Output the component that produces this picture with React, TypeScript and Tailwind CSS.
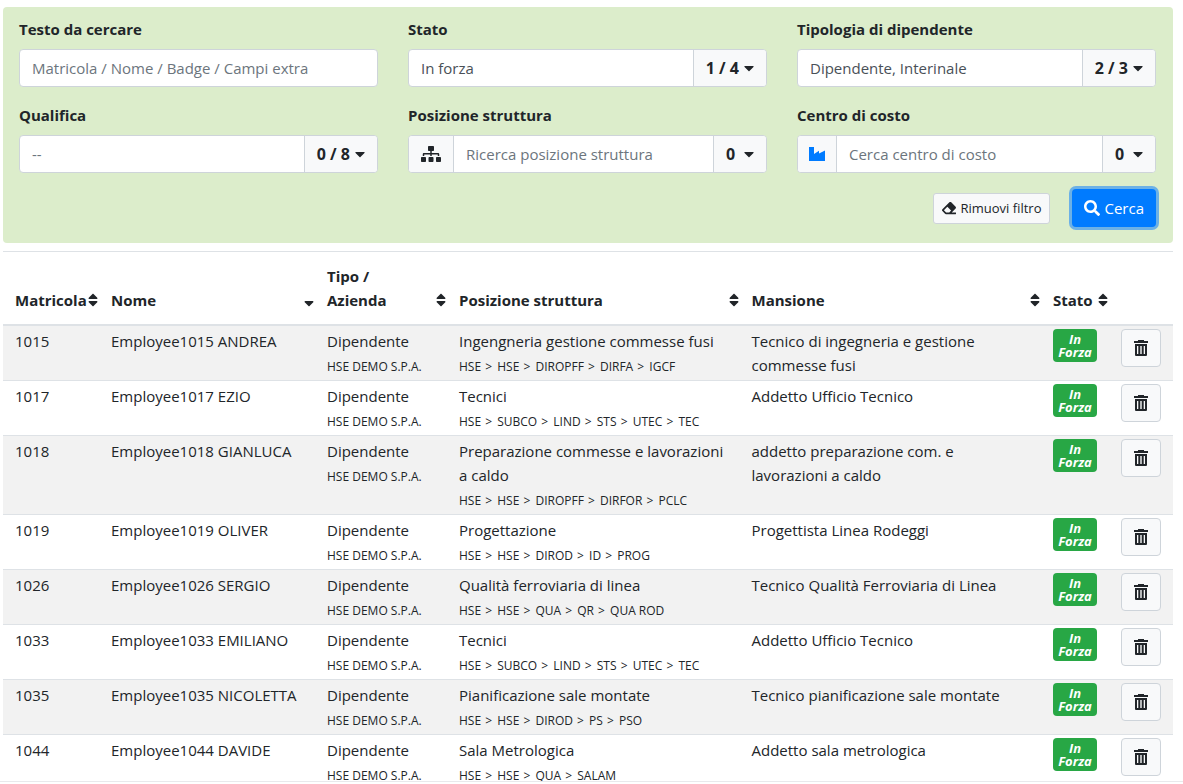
import React, { useState } from 'react';
import { FaCaretDown, FaEraser, FaSearch, FaSitemap, FaSort, FaSortDown } from 'react-icons/fa';

interface Employee {
  id: string;
  name: string;
  position: string;
  path: string[];
  job: string;
}

const employees: Employee[] = [
  { id: '1015', name: 'ANDREA', position: 'Ingengneria gestione commesse fusi', path: ['HSE', 'HSE', 'DIROPFF', 'DIRFA', 'IGCF'], job: 'Tecnico di ingegneria e gestione commesse fusi' },
  { id: '1017', name: 'EZIO', position: 'Tecnici', path: ['HSE', 'SUBCO', 'LIND', 'STS', 'UTEC', 'TEC'], job: 'Addetto Ufficio Tecnico' },
  { id: '1018', name: 'GIANLUCA', position: 'Preparazione commesse e lavorazioni a caldo', path: ['HSE', 'HSE', 'DIROPFF', 'DIRFOR', 'PCLC'], job: 'addetto preparazione com. e lavorazioni a caldo' },
  { id: '1019', name: 'OLIVER', position: 'Progettazione', path: ['HSE', 'HSE', 'DIROD', 'ID', 'PROG'], job: 'Progettista Linea Rodeggi' },
  { id: '1026', name: 'SERGIO', position: 'Qualità ferroviaria di linea', path: ['HSE', 'HSE', 'QUA', 'QR', 'QUA ROD'], job: 'Tecnico Qualità Ferroviaria di Linea' },
  { id: '1033', name: 'EMILIANO', position: 'Tecnici', path: ['HSE', 'SUBCO', 'LIND', 'STS', 'UTEC', 'TEC'], job: 'Addetto Ufficio Tecnico' },
  { id: '1035', name: 'NICOLETTA', position: 'Pianificazione sale montate', path: ['HSE', 'HSE', 'DIROD', 'PS', 'PSO'], job: 'Tecnico pianificazione sale montate' },
  { id: '1044', name: 'DAVIDE', position: 'Sala Metrologica', path: ['HSE', 'HSE', 'QUA', 'SALAM'], job: 'Addetto sala metrologica' },
];

const FactoryIcon = () => (
  <svg width="16" height="14" viewBox="0 0 16 14" fill="#007bff" aria-hidden="true">
    <path d="M0 0h5v7l5-3.200v2.700l6-3v10.500h-16z" />
  </svg>
);

const TrashIcon = () => (
  <svg width="14" height="16" viewBox="0 0 14 16" fill="#212529" aria-hidden="true">
    <path d="M4 0h6v1h4v2h-14v-2h4z" />
    <path fillRule="evenodd" d="M1 4h12v11a1 1 0 0 1-1 1h-10a1 1 0 0 1-1-1zM3 6v8h1.300v-8zM6.300 6v8h1.400v-8zM9.700 6v8h1.300v-8z" />
  </svg>
);

interface FieldProps {
  id: string;
  label: string;
  value?: string;
  placeholder?: string;
  icon?: React.ReactNode;
  count?: string;
}

const Field: React.FC<FieldProps> = ({ id, label, value = '', placeholder, icon, count }) => {
  const [text, setText] = useState(value);

  return (
    <div>
      <label htmlFor={id} className="block mb-2 font-bold">{label}</label>
      <div className="flex h-[38px] rounded border border-[#ced4da] bg-white overflow-hidden">
        {icon && (
          <span className="flex items-center px-[11px] bg-[#f8f9fa] border-r border-[#ced4da]">{icon}</span>
        )}
        <input
          id={id}
          type="text"
          value={text}
          placeholder={placeholder}
          onChange={(e) => setText(e.target.value)}
          className="flex-1 min-w-0 px-3 text-[#495057] placeholder:text-[#6c757d] outline-none"
        />
        {count && (
          <button type="button" className="flex items-center gap-[5px] px-3 bg-[#f8f9fa] border-l border-[#ced4da] text-base font-bold">
            <span className="min-w-[13px] text-left">{count}</span>
            <FaCaretDown className="h-4 w-[10px]" />
          </button>
        )}
      </div>
    </div>
  );
};

interface HeaderCellProps {
  children: React.ReactNode;
  sorted?: boolean;
}

const HeaderCell: React.FC<HeaderCellProps> = ({ children, sorted }) => (
  <th className="py-3 pl-3 pr-px align-bottom text-left font-bold">
    <div className="flex items-end justify-between">
      <span>{children}</span>
      <span className="flex h-6 items-center">
        {sorted ? <FaSortDown className="h-4 w-[10px]" /> : <FaSort className="h-4 w-[10px]" />}
      </span>
    </div>
  </th>
);

export default function App() {
  return (
    <div className="h-screen flex flex-col bg-white text-[#212529] text-[15px] leading-6 font-['Open_Sans','Noto_Sans',sans-serif]">
      <main className="flex-1 min-h-0 overflow-hidden pt-[7px] pl-[3px] pr-[10px]">
        <form className="rounded bg-[#dcedcb] pl-4 pr-[17px] pt-[10px] pb-4" onSubmit={(e) => e.preventDefault()}>
          <div className="grid grid-cols-3 gap-x-[30px] gap-y-4">
            <Field id="testo" label="Testo da cercare" placeholder="Matricola / Nome / Badge / Campi extra" />
            <Field id="stato" label="Stato" value="In forza" count="1 / 4" />
            <Field id="tipologia" label="Tipologia di dipendente" value="Dipendente, Interinale" count="2 / 3" />
            <Field id="qualifica" label="Qualifica" placeholder="--" count="0 / 8" />
            <Field id="posizione" label="Posizione struttura" placeholder="Ricerca posizione struttura" icon={<FaSitemap className="h-4 w-[22px]" />} count="0" />
            <Field id="centro" label="Centro di costo" placeholder="Cerca centro di costo" icon={<FactoryIcon />} count="0" />
          </div>
          <div className="mt-4 flex items-center justify-end gap-[22px]">
            <button type="button" className="flex h-[31px] items-center gap-1 rounded-[3px] border border-[#ced4da] bg-[#f8f9fa] px-2 text-[13px]">
              <FaEraser size={14} />
              Rimuovi filtro
            </button>
            <button type="submit" className="flex h-[38px] items-center gap-1 rounded bg-[#007bff] px-3 text-white ring-3 ring-[#6cb1e6]">
              <FaSearch size={16} />
              Cerca
            </button>
          </div>
        </form>

        <table className="mt-2 w-full table-fixed border-separate border-spacing-0 border-t border-[#dee2e6]">
          <colgroup>
            <col className="w-24" />
            <col className="w-[216px]" />
            <col className="w-[132px]" />
            <col className="w-1/4" />
            <col />
            <col className="w-[68px]" />
            <col className="w-16" />
          </colgroup>
          <thead className="[&_th]:border-b [&_th]:border-[#dee2e6]">
            <tr>
              <HeaderCell>Matricola</HeaderCell>
              <HeaderCell sorted>Nome</HeaderCell>
              <HeaderCell>Tipo /<br />Azienda</HeaderCell>
              <HeaderCell>Posizione struttura</HeaderCell>
              <HeaderCell>Mansione</HeaderCell>
              <HeaderCell>Stato</HeaderCell>
              <th />
            </tr>
          </thead>
          <tbody className="[&_td]:border-t [&_td]:border-[#dee2e6] [&_td]:px-3 [&_td]:py-[3px] [&_td]:align-top">
            {employees.map((e) => (
              <tr key={e.id} className="odd:bg-[#f2f2f2]">
                <td>{e.id}</td>
                <td>Employee{e.id} {e.name}</td>
                <td>
                  Dipendente
                  <div className="pt-1 text-xs leading-5 whitespace-nowrap">HSE DEMO S.P.A.</div>
                </td>
                <td>
                  {e.position}
                  <div className="pt-1 text-xs leading-5 whitespace-nowrap">
                    {e.path.map((unit, i) => (
                      <React.Fragment key={i}>
                        {i > 0 && <span className="ml-px mr-0.5"> &gt; </span>}
                        {unit}
                      </React.Fragment>
                    ))}
                  </div>
                </td>
                <td>{e.job}</td>
                <td>
                  <span className="block rounded bg-[#28a745] pt-1 pb-[3px] text-center text-[13px] leading-[13px] font-bold italic text-white">
                    In<br />Forza
                  </span>
                </td>
                <td>
                  <button type="button" aria-label="Elimina" className="flex h-[38px] w-10 items-center justify-center rounded border border-[#ced4da] bg-[#f8f9fa]">
                    <TrashIcon />
                  </button>
                </td>
              </tr>
            ))}
          </tbody>
        </table>
      </main>
      <footer className="h-[3px] border-t border-[#e9e9ec]" />
    </div>
  );
}
